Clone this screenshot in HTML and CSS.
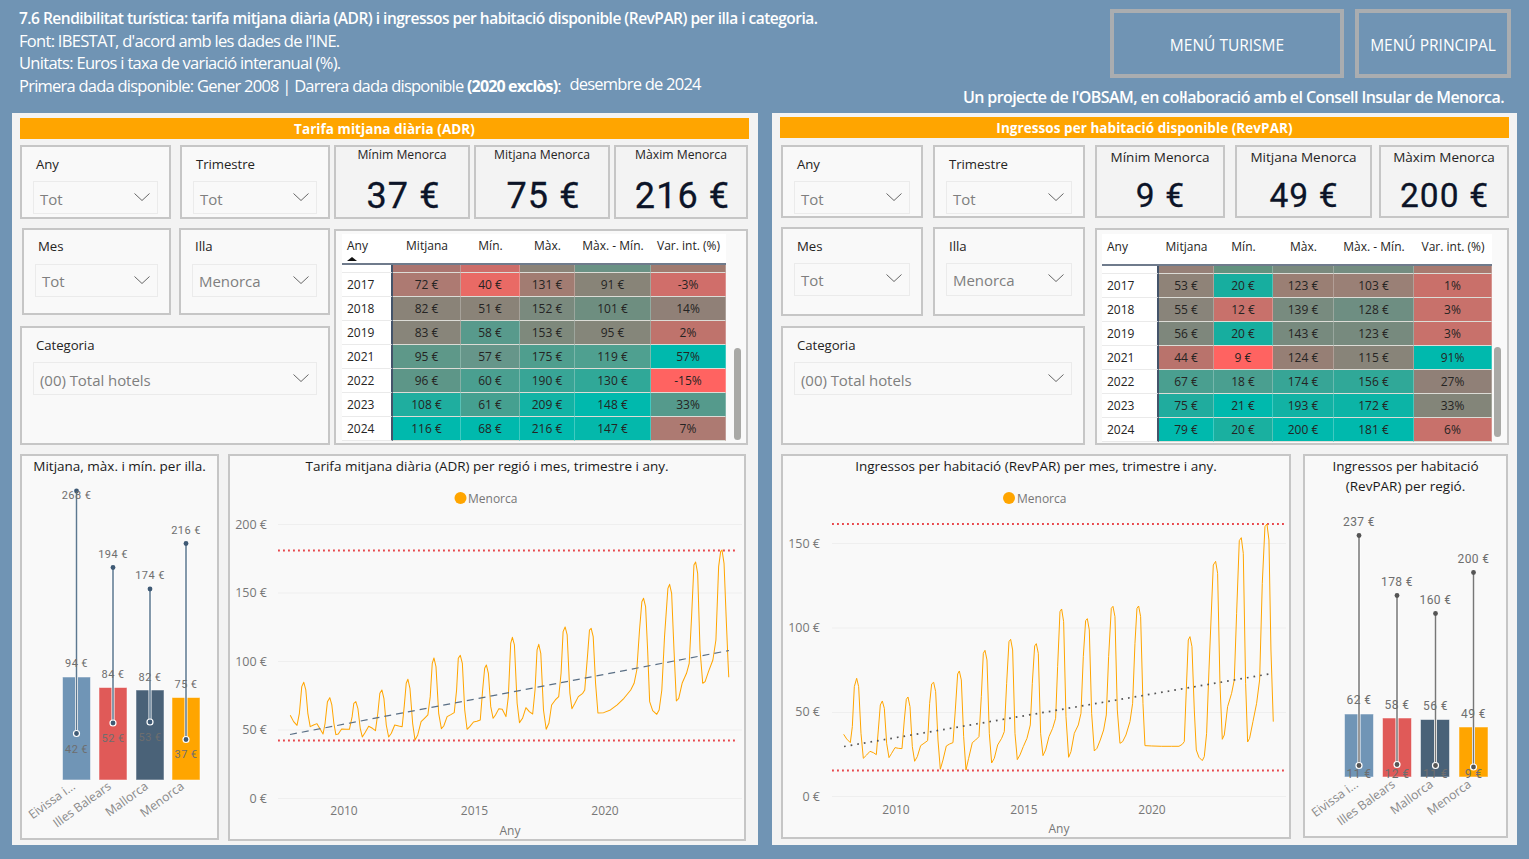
FILE: index.html
```html
<!DOCTYPE html>
<html lang="ca">
<head>
<meta charset="utf-8">
<title>7.6 Rendibilitat turística</title>
<link rel="stylesheet" href="styles.css">
</head>
<body>
<div class="page">
  <header class="head">
    <div class="intro">
      <p class="line strong">7.6 Rendibilitat turística: tarifa mitjana diària (ADR) i ingressos per habitació disponible (RevPAR) per illa i categoria.</p>
      <p class="line">Font: IBESTAT, d'acord amb les dades de l'INE.</p>
      <p class="line">Unitats: Euros i taxa de variació interanual (%).</p>
      <p class="line last">Primera dada disponible: Gener 2008 | Darrera dada disponible <b>(2020 exclòs)</b>: <span class="last-date">desembre de 2024</span></p>
    </div>
    <div class="head-right">
      <div class="menus">
        <a class="menu menu-a">MENÚ TURISME</a>
        <a class="menu menu-b">MENÚ PRINCIPAL</a>
      </div>
      <p class="credit">Un projecte de l'OBSAM, en col·laboració amb el Consell Insular de Menorca.</p>
    </div>
  </header>

  <main class="panels">
    <!-- ADR -->
    <section class="panel adr">
      <h2 class="bar">Tarifa mitjana diària (ADR)</h2>
      <div class="top">
        <div class="slicers">
          <div class="slicer"><div class="sl-label">Any</div><div class="combo"><span>Tot</span><svg class="chev" viewBox="0 0 16 8"><path d="M.5.5 8 7.5 15.5.5"/></svg></div></div>
          <div class="slicer"><div class="sl-label">Trimestre</div><div class="combo"><span>Tot</span><svg class="chev" viewBox="0 0 16 8"><path d="M.5.5 8 7.5 15.5.5"/></svg></div></div>
          <div class="slicer mes"><div class="sl-label">Mes</div><div class="combo"><span>Tot</span><svg class="chev" viewBox="0 0 16 8"><path d="M.5.5 8 7.5 15.5.5"/></svg></div></div>
          <div class="slicer illa"><div class="sl-label">Illa</div><div class="combo"><span>Menorca</span><svg class="chev" viewBox="0 0 16 8"><path d="M.5.5 8 7.5 15.5.5"/></svg></div></div>
          <div class="slicer wide"><div class="sl-label">Categoria</div><div class="combo"><span>(00) Total hotels</span><svg class="chev" viewBox="0 0 16 8"><path d="M.5.5 8 7.5 15.5.5"/></svg></div></div>
        </div>
        <div class="stats">
          <div class="kpis">
            <div class="kpi k1"><div class="kpi-t">Mínim Menorca</div><div class="kpi-v">37 €</div></div>
            <div class="kpi k2"><div class="kpi-t">Mitjana Menorca</div><div class="kpi-v">75 €</div></div>
            <div class="kpi k3"><div class="kpi-t">Màxim Menorca</div><div class="kpi-v">216 €</div></div>
          </div>
          <div class="tcard">
            <table class="heat">
              <colgroup><col class="c1"><col class="c2"><col class="c3"><col class="c4"><col class="c5"><col class="c6"></colgroup>
              <thead><tr><th class="first sorted">Any</th><th>Mitjana</th><th>Mín.</th><th>Màx.</th><th>Màx. - Mín.</th><th>Var. int. (%)</th></tr></thead>
              <tbody>
                <tr class="cut"><td class="first"></td><td style="background:#ab7570"></td><td style="background:#cd6d69"></td><td style="background:#8b8378"></td><td style="background:#6a9285"></td><td style="background:#a07b70"></td></tr>
                <tr><td class="first">2017</td><td style="background:#ad7a72">72 €</td><td style="background:#e96a65">40 €</td><td style="background:#a27c72">131 €</td><td style="background:#888478">91 €</td><td style="background:#d06e6a">-3%</td></tr>
                <tr><td class="first">2018</td><td style="background:#8a8378">82 €</td><td style="background:#8a8378">51 €</td><td style="background:#7a8a7e">152 €</td><td style="background:#6e8e80">101 €</td><td style="background:#908077">14%</td></tr>
                <tr><td class="first">2019</td><td style="background:#88857a">83 €</td><td style="background:#589a8c">58 €</td><td style="background:#7e897c">153 €</td><td style="background:#85867a">95 €</td><td style="background:#bf736c">2%</td></tr>
                <tr><td class="first">2021</td><td style="background:#5e9889">95 €</td><td style="background:#66968a">57 €</td><td style="background:#4f9e8e">175 €</td><td style="background:#4fa090">119 €</td><td style="background:#00b9ad">57%</td></tr>
                <tr><td class="first">2022</td><td style="background:#5d9688">96 €</td><td style="background:#4a9f90">60 €</td><td style="background:#38a596">190 €</td><td style="background:#30a898">130 €</td><td style="background:#ff6361">-15%</td></tr>
                <tr><td class="first">2023</td><td style="background:#1fae9f">108 €</td><td style="background:#45a090">61 €</td><td style="background:#12b3a5">209 €</td><td style="background:#00b9ad">148 €</td><td style="background:#559a8c">33%</td></tr>
                <tr><td class="first">2024</td><td style="background:#00b9ad">116 €</td><td style="background:#00b9ad">68 €</td><td style="background:#00b9ad">216 €</td><td style="background:#04b8ab">147 €</td><td style="background:#ad7a72">7%</td></tr>
              </tbody>
            </table>
            <div class="scroll"></div>
          </div>
        </div>
      </div>
      <div class="bottom">
        <div class="chart ch-a">
          <div class="ch-title">Mitjana, màx. i mín. per illa.</div>
          <svg class="plot" width="195" height="358" viewBox="22 480 195 358">
            <rect class="b-blue" x="62.5" y="677" width="28" height="103"/>
            <rect class="b-red" x="99" y="687.5" width="28" height="92.5"/>
            <rect class="b-navy" x="136" y="690" width="28" height="90"/>
            <rect class="b-orange" x="172" y="697.5" width="28" height="82.5"/>
            <g class="halo"><path d="M76.5 491V733M113 567V723M150 589V722M186 543V739"/></g>
            <g class="stem-a"><path d="M76.5 491V733M113 567V723M150 589V722M186 543V739"/></g>
            <g class="pin-a">
              <circle cx="76.5" cy="491" r="2.4"/><circle cx="113" cy="567.5" r="2.4"/><circle cx="150" cy="589" r="2.4"/><circle cx="186" cy="543.5" r="2.4"/>
              <circle class="ring" cx="76.5" cy="733.5" r="3"/><circle class="ring" cx="113" cy="723" r="3"/><circle class="ring" cx="150" cy="722" r="3"/><circle class="ring" cx="186" cy="739.5" r="3"/>
            </g>
            <g class="lab-l">
              <text x="76.5" y="666.5">94 €</text><text x="113" y="678">84 €</text><text x="150" y="681">82 €</text><text x="186" y="688">75 €</text>
              <text x="76.5" y="753">42 €</text><text x="113" y="742">52 €</text><text x="150" y="741">53 €</text><text x="186" y="758">37 €</text>
            </g>
            <g class="lab-s">
              <text x="76.5" y="498.5">268 €</text><text x="113" y="558">194 €</text><text x="150" y="579">174 €</text><text x="186" y="534">216 €</text>
            </g>
            <g class="cat">
              <text transform="translate(76 788) rotate(-36)">Eivissa i...</text>
              <text transform="translate(112 788) rotate(-36)">Illes Balears</text>
              <text transform="translate(149 788) rotate(-36)">Mallorca</text>
              <text transform="translate(185 788) rotate(-36)">Menorca</text>
            </g>
          </svg>
        </div>
        <div class="chart ch-b">
          <div class="ch-title">Tarifa mitjana diària (ADR) per regió i mes, trimestre i any.</div>
          <svg class="plot" width="514" height="359" viewBox="230 480 514 359">
            <circle class="leg-dot" cx="460.5" cy="498" r="6"/><text class="leg" x="468" y="503">Menorca</text>
            <path class="grid" d="M278 524.5H742M278 593H742M278 661.5H742M278 730H742M278 798.5H742"/>
            <g class="y-lab"><text x="267" y="529">200 €</text><text x="267" y="597">150 €</text><text x="267" y="666">100 €</text><text x="267" y="734">50 €</text><text x="267" y="803">0 €</text></g>
            <path class="limit" d="M278 550.5H737M278 740.5H737"/>
            <polyline class="series" transform="translate(225 450) scale(.3381 .3333)" points="193,796 203,815 213,826 220,790 227,710 233,697 239,720 245,790 252,830 262,825 272,821 280,835 290,852 296,820 303,755 310,743 316,765 322,820 328,854 335,852 345,837 358,838 368,838 376,800 381,760 387,755 393,775 400,835 406,861 414,848 425,829 436,835 445,842 452,790 458,730 464,720 470,745 477,825 484,861 492,850 502,825 514,828 524,830 530,770 536,700 541,688 547,715 555,820 562,870 570,855 580,815 590,805 600,795 607,740 613,640 618,624 624,650 632,790 640,836 647,828 657,800 668,794 678,788 685,720 690,625 696,616 702,640 709,780 716,838 724,830 735,816 745,814 755,810 762,720 768,655 773,645 779,670 786,770 793,805 800,795 810,776 820,778 831,800 838,740 845,580 850,562 856,585 864,760 871,818 880,805 890,773 900,785 910,792 917,720 923,600 928,583 934,610 942,780 950,838 958,820 966,765 977,750 987,740 994,670 1000,545 1006,531 1012,555 1020,730 1026,776 1035,760 1045,740 1058,730 1064,720 1072,620 1078,540 1083,535 1089,560 1096,700 1103,789 1120,788 1140,780 1160,765 1180,745 1200,720 1210,700 1218,660 1226,540 1233,455 1238,445 1244,470 1250,600 1256,755 1265,782 1277,793 1284,780 1292,720 1300,560 1310,415 1315,403 1321,430 1328,600 1335,753 1342,745 1352,700 1365,670 1373,640 1380,500 1387,345 1392,336 1398,370 1405,600 1413,700 1420,695 1430,665 1443,630 1452,570 1460,350 1466,305 1470,300 1476,340 1483,520 1488,640 1490,682"/>
            <path class="trend-dash" d="M290 734.5 729 650.5"/>
            <g class="x-lab"><text x="344" y="815">2010</text><text x="474.5" y="815">2015</text><text x="605" y="815">2020</text><text x="510" y="835">Any</text></g>
          </svg>
        </div>
      </div>
    </section>

    <!-- RevPAR -->
    <section class="panel rev">
      <h2 class="bar">Ingressos per habitació disponible (RevPAR)</h2>
      <div class="top">
        <div class="slicers">
          <div class="slicer"><div class="sl-label">Any</div><div class="combo"><span>Tot</span><svg class="chev" viewBox="0 0 16 8"><path d="M.5.5 8 7.5 15.5.5"/></svg></div></div>
          <div class="slicer"><div class="sl-label">Trimestre</div><div class="combo"><span>Tot</span><svg class="chev" viewBox="0 0 16 8"><path d="M.5.5 8 7.5 15.5.5"/></svg></div></div>
          <div class="slicer mes"><div class="sl-label">Mes</div><div class="combo"><span>Tot</span><svg class="chev" viewBox="0 0 16 8"><path d="M.5.5 8 7.5 15.5.5"/></svg></div></div>
          <div class="slicer illa"><div class="sl-label">Illa</div><div class="combo"><span>Menorca</span><svg class="chev" viewBox="0 0 16 8"><path d="M.5.5 8 7.5 15.5.5"/></svg></div></div>
          <div class="slicer wide"><div class="sl-label">Categoria</div><div class="combo"><span>(00) Total hotels</span><svg class="chev" viewBox="0 0 16 8"><path d="M.5.5 8 7.5 15.5.5"/></svg></div></div>
        </div>
        <div class="stats">
          <div class="kpis">
            <div class="kpi k1"><div class="kpi-t">Mínim Menorca</div><div class="kpi-v">9 €</div></div>
            <div class="kpi k2"><div class="kpi-t">Mitjana Menorca</div><div class="kpi-v">49 €</div></div>
            <div class="kpi k3"><div class="kpi-t">Màxim Menorca</div><div class="kpi-v">200 €</div></div>
          </div>
          <div class="tcard">
            <table class="heat">
              <colgroup><col class="c1"><col class="c2"><col class="c3"><col class="c4"><col class="c5"><col class="c6"></colgroup>
              <thead><tr><th class="first">Any</th><th>Mitjana</th><th>Mín.</th><th>Màx.</th><th>Màx. - Mín.</th><th>Var. int. (%)</th></tr></thead>
              <tbody>
                <tr class="cut"><td class="first"></td><td style="background:#968077"></td><td style="background:#62927f"></td><td style="background:#7a8a7e"></td><td style="background:#748d81"></td><td style="background:#a87a70"></td></tr>
                <tr><td class="first">2017</td><td style="background:#8f8378">53 €</td><td style="background:#17ae9f">20 €</td><td style="background:#9a7f74">123 €</td><td style="background:#9a8076">103 €</td><td style="background:#c9706a">1%</td></tr>
                <tr><td class="first">2018</td><td style="background:#89847a">55 €</td><td style="background:#c8716b">12 €</td><td style="background:#788b7f">139 €</td><td style="background:#6e8e82">128 €</td><td style="background:#c8716b">3%</td></tr>
                <tr><td class="first">2019</td><td style="background:#7e877c">56 €</td><td style="background:#17ae9f">20 €</td><td style="background:#778a7e">143 €</td><td style="background:#778a7e">123 €</td><td style="background:#c8716b">3%</td></tr>
                <tr><td class="first">2021</td><td style="background:#b9736c">44 €</td><td style="background:#ff6361">9 €</td><td style="background:#967f75">124 €</td><td style="background:#888479">115 €</td><td style="background:#00b9ad">91%</td></tr>
                <tr><td class="first">2022</td><td style="background:#4a9f90">67 €</td><td style="background:#4a9f90">18 €</td><td style="background:#37a596">174 €</td><td style="background:#30a898">156 €</td><td style="background:#908077">27%</td></tr>
                <tr><td class="first">2023</td><td style="background:#20ac9e">75 €</td><td style="background:#00b9ad">21 €</td><td style="background:#12b2a4">193 €</td><td style="background:#0cb4a6">172 €</td><td style="background:#838579">33%</td></tr>
                <tr><td class="first">2024</td><td style="background:#00b9ad">79 €</td><td style="background:#1ab0a0">20 €</td><td style="background:#00b9ad">200 €</td><td style="background:#00b9ad">181 €</td><td style="background:#c8716b">6%</td></tr>
              </tbody>
            </table>
            <div class="scroll"></div>
          </div>
        </div>
      </div>
      <div class="bottom">
        <div class="chart ch-c">
          <div class="ch-title">Ingressos per habitació (RevPAR) per mes, trimestre i any.</div>
          <svg class="plot" width="506" height="357" viewBox="783 480 506 357">
            <circle class="leg-dot" cx="1009" cy="498" r="6"/><text class="leg" x="1017" y="503">Menorca</text>
            <path class="grid" d="M832 543.5H1286M832 628H1286M832 712.5H1286M832 796.5H1286"/>
            <g class="y-lab"><text x="820" y="548">150 €</text><text x="820" y="632">100 €</text><text x="820" y="716">50 €</text><text x="820" y="801">0 €</text></g>
            <path class="limit" d="M832 524H1285M832 770.5H1285"/>
            <polyline class="series" transform="translate(775 450) scale(.3333)" points="206,853 215,867 226,878 232,830 238,710 245,685 251,710 258,850 265,925 275,915 285,904 295,908 304,914 310,840 316,765 322,753 328,775 335,880 342,923 350,910 360,893 370,895 381,896 388,810 394,748 399,741 405,770 412,890 419,934 427,920 437,887 447,880 458,872 464,760 470,702 476,697 482,725 489,870 496,958 504,930 514,888 524,882 534,878 541,780 548,672 553,663 559,690 566,860 573,960 581,925 592,878 602,870 612,860 619,740 625,610 630,601 636,630 643,850 650,939 658,925 668,885 680,865 688,845 695,700 702,575 707,568 713,600 720,850 727,929 735,915 745,890 756,865 766,825 772,700 779,588 784,581 790,610 797,850 804,917 812,900 822,860 833,835 842,805 848,650 855,485 860,477 866,515 873,800 881,922 888,905 898,850 910,825 918,790 925,620 932,512 937,506 943,540 950,790 958,903 966,895 976,870 986,840 994,795 1001,620 1009,475 1014,469 1020,500 1027,780 1035,880 1043,875 1053,855 1065,815 1073,760 1080,580 1086,475 1091,468 1097,500 1104,760 1110,887 1130,888 1160,889 1190,889 1212,889 1222,883 1228,875 1234,720 1240,570 1245,560 1251,590 1258,780 1264,900 1272,922 1282,932 1288,920 1295,850 1302,660 1315,345 1322,334 1328,370 1335,700 1342,868 1348,855 1358,770 1370,730 1378,690 1385,490 1393,272 1399,263 1405,310 1412,700 1418,876 1424,865 1434,815 1445,760 1454,690 1462,400 1470,230 1476,222 1482,270 1488,600 1495,815"/>
            <path class="trend-dot" d="M844 746.5 1272 673.5"/>
            <g class="x-lab"><text x="896" y="814">2010</text><text x="1024" y="814">2015</text><text x="1152" y="814">2020</text><text x="1059" y="833">Any</text></g>
          </svg>
        </div>
        <div class="chart ch-d">
          <div class="ch-title">Ingressos per habitació (RevPAR) per regió.</div>
          <svg class="plot" width="201" height="336" viewBox="1305 500 201 336">
            <rect class="b-blue" x="1344.5" y="714" width="29" height="63"/>
            <rect class="b-red" x="1382.5" y="718" width="29" height="59"/>
            <rect class="b-navy" x="1420.5" y="719.5" width="29" height="57.5"/>
            <rect class="b-orange" x="1459" y="727" width="29" height="50"/>
            <g class="halo"><path d="M1359 535V765M1397 595V764M1435.5 614V766M1473.5 573V767"/></g>
            <g class="stem-b"><path d="M1359 535V765M1397 595V764M1435.5 614V766M1473.5 573V767"/></g>
            <g class="pin-b">
              <circle cx="1359" cy="535.5" r="2.4"/><circle cx="1397" cy="595.5" r="2.4"/><circle cx="1435.5" cy="613.5" r="2.4"/><circle cx="1473.5" cy="572.5" r="2.4"/>
              <circle class="ring" cx="1359" cy="765.5" r="3"/><circle class="ring" cx="1397" cy="764.5" r="3"/><circle class="ring" cx="1435.5" cy="765.5" r="3"/><circle class="ring" cx="1473.5" cy="767" r="3"/>
            </g>
            <g class="lab-l">
              <text x="1359" y="704">62 €</text><text x="1397" y="708.5">58 €</text><text x="1435.5" y="710">56 €</text><text x="1473.5" y="717.5">49 €</text>
              <text x="1359" y="778">11 €</text><text x="1397" y="778">12 €</text><text x="1435.5" y="778">11 €</text><text x="1473.5" y="778">9 €</text>
            </g>
            <g class="lab-s lab-m">
              <text x="1359" y="526">237 €</text><text x="1397" y="586">178 €</text><text x="1435.5" y="604">160 €</text><text x="1473.5" y="563">200 €</text>
            </g>
            <g class="cat">
              <text transform="translate(1359 786) rotate(-36)">Eivissa i...</text>
              <text transform="translate(1396 786) rotate(-36)">Illes Balears</text>
              <text transform="translate(1434 786) rotate(-36)">Mallorca</text>
              <text transform="translate(1472 786) rotate(-36)">Menorca</text>
            </g>
          </svg>
        </div>
      </div>
    </section>
  </main>
</div>
</body>
</html>
```
FILE: styles.css
```css
* { box-sizing: border-box; }
html, body { margin: 0; padding: 0; }
body {
  width: 1529px;
  height: 859px;
  overflow: hidden;
  background: #7094b4;
  font-family: "Open Sans", "Noto Sans", "Liberation Sans", sans-serif;
  color: #252423;
}
.page { display: flex; flex-direction: column; height: 859px; }

/* header */
.head { height: 113px; flex: none; display: flex; justify-content: space-between; color: #fff; }
.intro { padding: 7px 0 0 19px; }
.line { margin: 0; height: 22.5px; line-height: 22.5px; font-size: 16.5px; letter-spacing: -.7px; white-space: nowrap; }
.line.strong { font-weight: 600; font-size: 15.5px; letter-spacing: -.505px; }
.line.last { letter-spacing: -.76px; }
.line b { font-weight: 700; letter-spacing: -.85px; font-size: 16px; }
.last-date { margin-left: 5px; position: relative; top: -2px; }
.head-right { width: 420px; padding-top: 9px; display: flex; flex-direction: column; align-items: flex-end; padding-right: 19px; }
.menus { display: flex; gap: 11px; margin-right: -1px; }
.menu { height: 69px; border: 4px solid #aaadb0; padding-top: 2px; display: flex; align-items: center; justify-content: center; font-size: 15.5px; letter-spacing: 0; color: #fff; }
.menu-a { width: 234px; }
.menu-b { width: 156px; }
.credit { margin: 9px 6px 0 0; font-size: 16px; font-weight: 600; letter-spacing: -.58px; white-space: nowrap; line-height: 20px; }

/* panels */
.panels { display: flex; gap: 14px; padding-left: 12px; height: 732px; flex: none; }
.panel { background: #f3f3f3; height: 732px; padding-left: 8px; }
.panel.adr { width: 746px; padding-top: 5px; }
.panel.rev { width: 745px; padding-top: 4px; }
.bar { margin: 0; width: 729px; height: 21px; background: #ffa500; color: #fff; font-size: 13.5px; font-weight: 700; line-height: 22px; text-align: center; letter-spacing: .06px; }
.top { display: flex; }
.adr .top { margin-top: 6px; gap: 4px; }
.rev .top { margin-top: 7px; margin-left: 1px; gap: 10px; }

/* slicers */
.slicers { display: grid; }
.adr .slicers { grid-template-columns: 151px 150px; grid-template-rows: 74px 87px 119px; column-gap: 9px; row-gap: 9px; }
.rev .slicers { grid-template-columns: 142px 152px; grid-template-rows: 73px 89px 119px; column-gap: 10px; row-gap: 9px; }
.adr .slicer.wide { margin-top: 2px; height: 119px; }
.rev .slicer.wide { margin-top: 1px; height: 119px; }
.slicer { background: #f9f9f9; border: 2px solid #c6c6c6; padding: 8px 11px 0; }
.slicer.wide { grid-column: 1 / 3; }
.adr .slicer.mes { margin-left: 2px; }
.adr .slicer.illa { margin-left: -1px; }
.adr .slicer.mes, .adr .slicer.illa { padding-top: 7px; }
.adr .mes .combo, .adr .illa .combo { margin-top: 9px; padding-top: 1px; }
.rev .mes .combo, .rev .illa .combo { padding-top: 0; }
.sl-label { font-size: 13.2px; line-height: 18px; margin-left: 3px; letter-spacing: -.05px; }
.combo { margin-top: 8px; height: 33px; border: 1px solid #ebebeb; padding: 2px 7px 0 6px; display: flex; align-items: center; justify-content: space-between; font-size: 15px; color: #7f7f7f; letter-spacing: -.05px; }
.chev { width: 16px; height: 8px; fill: none; stroke: #666; stroke-width: 1; margin-top: -3px; }

/* KPI cards */
.stats { width: 414px; display: flex; flex-direction: column; gap: 10px; }
.kpis { display: flex; }
.adr .kpis { gap: 4px; height: 74px; }
.rev .kpis { height: 73px; }
.kpi { background: #f3f3f3; border: 2px solid #c6c6c6; text-align: center; display: flex; flex-direction: column; align-items: center; }
.adr .k1, .adr .k2 { width: 136px; }
.adr .k3 { width: 134px; }
.rev .k1 { width: 130px; margin-right: 10px; }
.rev .k2 { width: 137px; margin-right: 7px; }
.rev .k3 { width: 130px; }
.kpi-t { font-size: 12.2px; line-height: 16px; letter-spacing: 0; }
.rev .kpi-t { font-size: 13.5px; padding-top: 2px; }
.kpi-v { font-family: Roboto, "Liberation Sans", sans-serif; font-weight: 400; font-size: 36px; line-height: 40px; margin-top: 13px; padding-left: 3px; color: #0c1428; letter-spacing: 1.1px; -webkit-text-stroke: .3px #0c1428; }
.rev .kpi-v { font-size: 33.5px; margin-top: 11px; padding-left: 1px; }

/* heat tables */
.tcard { position: relative; height: 216px; background: #f9f9f9; border: 2px solid #c6c6c6; padding: 3px 0 0 6px; }
.rev .tcard { height: 217px; padding: 4px 0 0 5px; }
.heat { border-collapse: separate; border-spacing: 0; table-layout: fixed; background: #fff; font-size: 12px; color: #252423; }
.adr .heat { width: 384px; }
.rev .heat { width: 390px; }
.adr .c1 { width: 51px; } .adr .c2 { width: 68px; } .adr .c3 { width: 59px; } .adr .c4 { width: 55px; } .adr .c5 { width: 76px; } .adr .c6 { width: 75px; }
.rev .c1 { width: 57px; } .rev .c2 { width: 55px; } .rev .c3 { width: 59px; } .rev .c4 { width: 61px; } .rev .c5 { width: 80px; } .rev .c6 { width: 78px; }
.heat th { height: 31px; padding: 0 0 6px; font-weight: 400; text-align: center; white-space: nowrap; border-bottom: 2px solid #6f7b8c; }
.rev .heat th { height: 32px; }
.heat td { height: 24px; padding: 0; text-align: center; border-bottom: 1px solid #dcdcd6; border-right: 1px solid rgba(255,255,255,.25); white-space: nowrap; overflow: hidden; }
.heat .first { text-align: left; padding-left: 5px; border-right: 2px solid #44546a; }
.heat th.first { border-right: 0; }
.heat td.first { border-bottom: 1px solid #eaeaea; }
.heat tr.cut td { height: 8px; font-size: 0; line-height: 0; }
.sorted { position: relative; }
.sorted::after { content: ""; position: absolute; left: 5px; top: 23px; border: 5px solid transparent; border-top: 0; border-bottom: 4px solid #111; }
.scroll { position: absolute; left: 398px; top: 117px; width: 7px; height: 92px; border-radius: 4px; background: #a9a9a6; }
.rev .scroll { left: 397px; height: 90px; }

/* charts */
.bottom { display: flex; margin-top: 9px; }
.adr .bottom { gap: 9px; }
.rev .bottom { gap: 12px; margin-left: 1px; }
.chart { background: #f9f9f9; border: 2px solid #c6c6c6; display: flex; flex-direction: column; }
.ch-a { width: 199px; height: 386px; }
.ch-b { width: 518px; height: 387px; }
.ch-c { width: 510px; height: 385px; }
.ch-d { width: 205px; height: 384px; }
.ch-title { height: 24px; flex: none; text-align: center; font-size: 13.5px; line-height: 20px; color: #1a1a1a; }
.ch-d .ch-title { height: 44px; padding: 0 20px; }
.plot { display: block; flex: none; }
.plot text { font-family: "Open Sans", "Noto Sans", sans-serif; }
.grid { stroke: #efefef; stroke-width: 1.2; fill: none; }
.limit { stroke: #e8474c; stroke-width: 1.9; stroke-dasharray: 1.9 3.1; fill: none; }
.series { fill: none; stroke: #ffa500; stroke-width: 3; stroke-linejoin: round; }
.trend-dash { fill: none; stroke: #5a6f85; stroke-width: 1.2; stroke-dasharray: 7 5; }
.trend-dot { fill: none; stroke: #555; stroke-width: 1.7; stroke-dasharray: 1.7 5; }
.y-lab text { font-size: 12.5px; fill: #777; text-anchor: end; }
.x-lab text { font-size: 12px; fill: #777; text-anchor: middle; }
.leg { font-size: 12px; fill: #777; }
.leg-dot { fill: #ffa500; }
.b-blue, .b-red, .b-navy, .b-orange { stroke-width: 1; stroke-opacity: .5; stroke: #fff; }
.b-blue { fill: #7095b6; }
.b-red { fill: #e05a58; }
.b-navy { fill: #4a6278; }
.b-orange { fill: #ffa500; }
.halo path { fill: none; stroke: #fff; stroke-width: 3; }
.stem-a path { fill: none; stroke: #5c7890; stroke-width: 1.5; }
.stem-b path { fill: none; stroke: #777; stroke-width: 1.5; }
.pin-a circle { fill: #3f5a75; }
.pin-b circle { fill: #555; }
.ring { stroke: #fff; stroke-width: 1.2; }
.plot .lab-l text, .plot .lab-s text { font-family: Roboto, sans-serif; font-size: 11px; fill: #6e6e6e; text-anchor: middle; letter-spacing: .4px; }
.plot .lab-m text { font-size: 12px; }
.ch-d .lab-l text { font-size: 12px; }
.plot .cat text { font-size: 12.3px; fill: #8a8a8a; text-anchor: end; }
```
